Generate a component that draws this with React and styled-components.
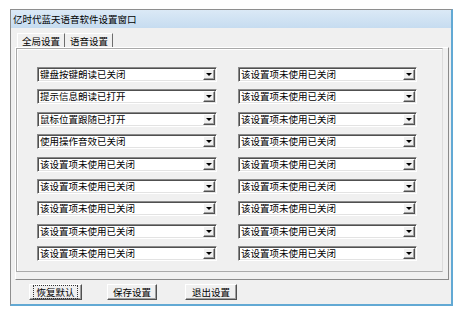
import React from "react"
import styled, { createGlobalStyle } from "styled-components"

const GlobalStyle = createGlobalStyle`
  body {
    margin: 0;
    background: #ffffff;
    font-family: "Noto Sans CJK SC", "Noto Sans", sans-serif;
  }
`

const Window = styled.div`
  box-sizing: border-box;
  margin: 9px 0 0 10px;
  width: 443px;
  height: 297px;
  background: #f0f0f0;
  border-left: 1px solid #8e8e8e;
  border-top: 1px solid #8e8e8e;
  border-right: 2px solid #62a9d4;
  border-bottom: 2px solid #62a9d4;
  display: flex;
  flex-direction: column;
`

const TitleBar = styled.div`
  height: 18px;
  background: linear-gradient(#dbe9f6, #c6dcf0);
  display: flex;
  align-items: center;
  padding-left: 2px;
  font-size: 9.5px;
  color: #000;
`

const Body = styled.div`
  padding: 5px 0 0 4px;
  display: flex;
  flex-direction: column;
`

const TabStrip = styled.div`
  display: flex;
  height: 14px;
  padding-left: 2px;
`

const Tab = styled.div`
  box-sizing: border-box;
  height: 14px;
  padding: 0 4px;
  display: flex;
  align-items: center;
  font-size: 9.5px;
  line-height: 12px;
  color: #000;
  border-left: 1px solid ${p => (p.$active ? "#ffffff" : "transparent")};
  border-top: 1px solid #ffffff;
  border-right: 1px solid #6d6d6d;
`

const TabPanel = styled.div`
  box-sizing: border-box;
  width: 434px;
  height: 233px;
  border-left: 1px solid #ffffff;
  border-top: 1px solid #ffffff;
  border-right: 1px solid #8a8a8a;
  border-bottom: 1px solid #8a8a8a;
`

const GroupBox = styled.div`
  box-sizing: border-box;
  width: 427px;
  height: 224px;
  border: 1px solid #a9a9a9;
  border-right-color: #dcdcdc;
  box-shadow: inset 1px 1px 0 #ffffff;
  padding: 18px 0 0 20px;
`

const Grid = styled.div`
  display: grid;
  grid-template-columns: 180px 179px;
  column-gap: 21px;
  row-gap: 7.4px;
`

const Combo = styled.div`
  box-sizing: border-box;
  height: 15px;
  background: #fff;
  border-top: 1px solid #8a8a8a;
  border-left: 1px solid #8a8a8a;
  border-right: 1px solid #ffffff;
  border-bottom: 1px solid #ffffff;
  box-shadow: inset 1px 1px 0 #505050, inset -1px -1px 0 #e3e3e3;
  display: flex;
  align-items: center;
  padding: 0 1px 0 2px;
`

const ComboText = styled.span`
  flex: 1;
  font-size: 9.5px;
  line-height: 13px;
  color: #000;
  white-space: nowrap;
`

const DropButton = styled.div`
  box-sizing: border-box;
  width: 12px;
  height: 11px;
  background: #f0f0f0;
  border-top: 1px solid #ffffff;
  border-left: 1px solid #ffffff;
  border-right: 1px solid #505050;
  border-bottom: 1px solid #505050;
  box-shadow: inset -1px -1px 0 #a0a0a0;
  display: flex;
  align-items: center;
  justify-content: center;
`

const Arrow = styled.div`
  width: 0;
  height: 0;
  border-left: 3px solid transparent;
  border-right: 3px solid transparent;
  border-top: 3px solid #000;
`

const ButtonBar = styled.div`
  display: flex;
  padding: 4px 0 0 14px;
`

const Button = styled.div`
  box-sizing: border-box;
  width: ${p => p.$w}px;
  height: 16px;
  margin-right: ${p => p.$mr || 0}px;
  background: #f0f0f0;
  border-top: 1px solid #ffffff;
  border-left: 1px solid #ffffff;
  border-right: 1px solid #505050;
  border-bottom: 1px solid #505050;
  box-shadow: inset -1px -1px 0 #a0a0a0;
  display: flex;
  align-items: center;
  justify-content: center;
  font-size: 9.5px;
  line-height: 12px;
  color: #000;
`

const Focus = styled.span`
  padding: 0 2px;
  outline: 1px dotted #333;
  outline-offset: 0;
  line-height: 12px;
`

const leftItems = [
  "键盘按键朗读已关闭",
  "提示信息朗读已打开",
  "鼠标位置跟随已打开",
  "使用操作音效已关闭",
  "该设置项未使用已关闭",
  "该设置项未使用已关闭",
  "该设置项未使用已关闭",
  "该设置项未使用已关闭",
  "该设置项未使用已关闭",
]

const rows = leftItems.map(l => [l, "该设置项未使用已关闭"])

const Select = ({ text }) => (
  <Combo>
    <ComboText>{text}</ComboText>
    <DropButton>
      <Arrow />
    </DropButton>
  </Combo>
)

export default function App() {
  return (
    <>
      <GlobalStyle />
      <Window>
        <TitleBar>亿时代蓝天语音软件设置窗口</TitleBar>
        <Body>
          <TabStrip>
            <Tab $active>全局设置</Tab>
            <Tab>语音设置</Tab>
          </TabStrip>
          <TabPanel>
            <GroupBox>
              <Grid>
                {rows.map((r, i) => (
                  <React.Fragment key={i}>
                    <Select text={r[0]} />
                    <Select text={r[1]} />
                  </React.Fragment>
                ))}
              </Grid>
            </GroupBox>
          </TabPanel>
          <ButtonBar>
            <Button $w={53} $mr={25}>
              <Focus>恢复默认</Focus>
            </Button>
            <Button $w={50} $mr={28}>保存设置</Button>
            <Button $w={52}>退出设置</Button>
          </ButtonBar>
        </Body>
      </Window>
    </>
  )
}
